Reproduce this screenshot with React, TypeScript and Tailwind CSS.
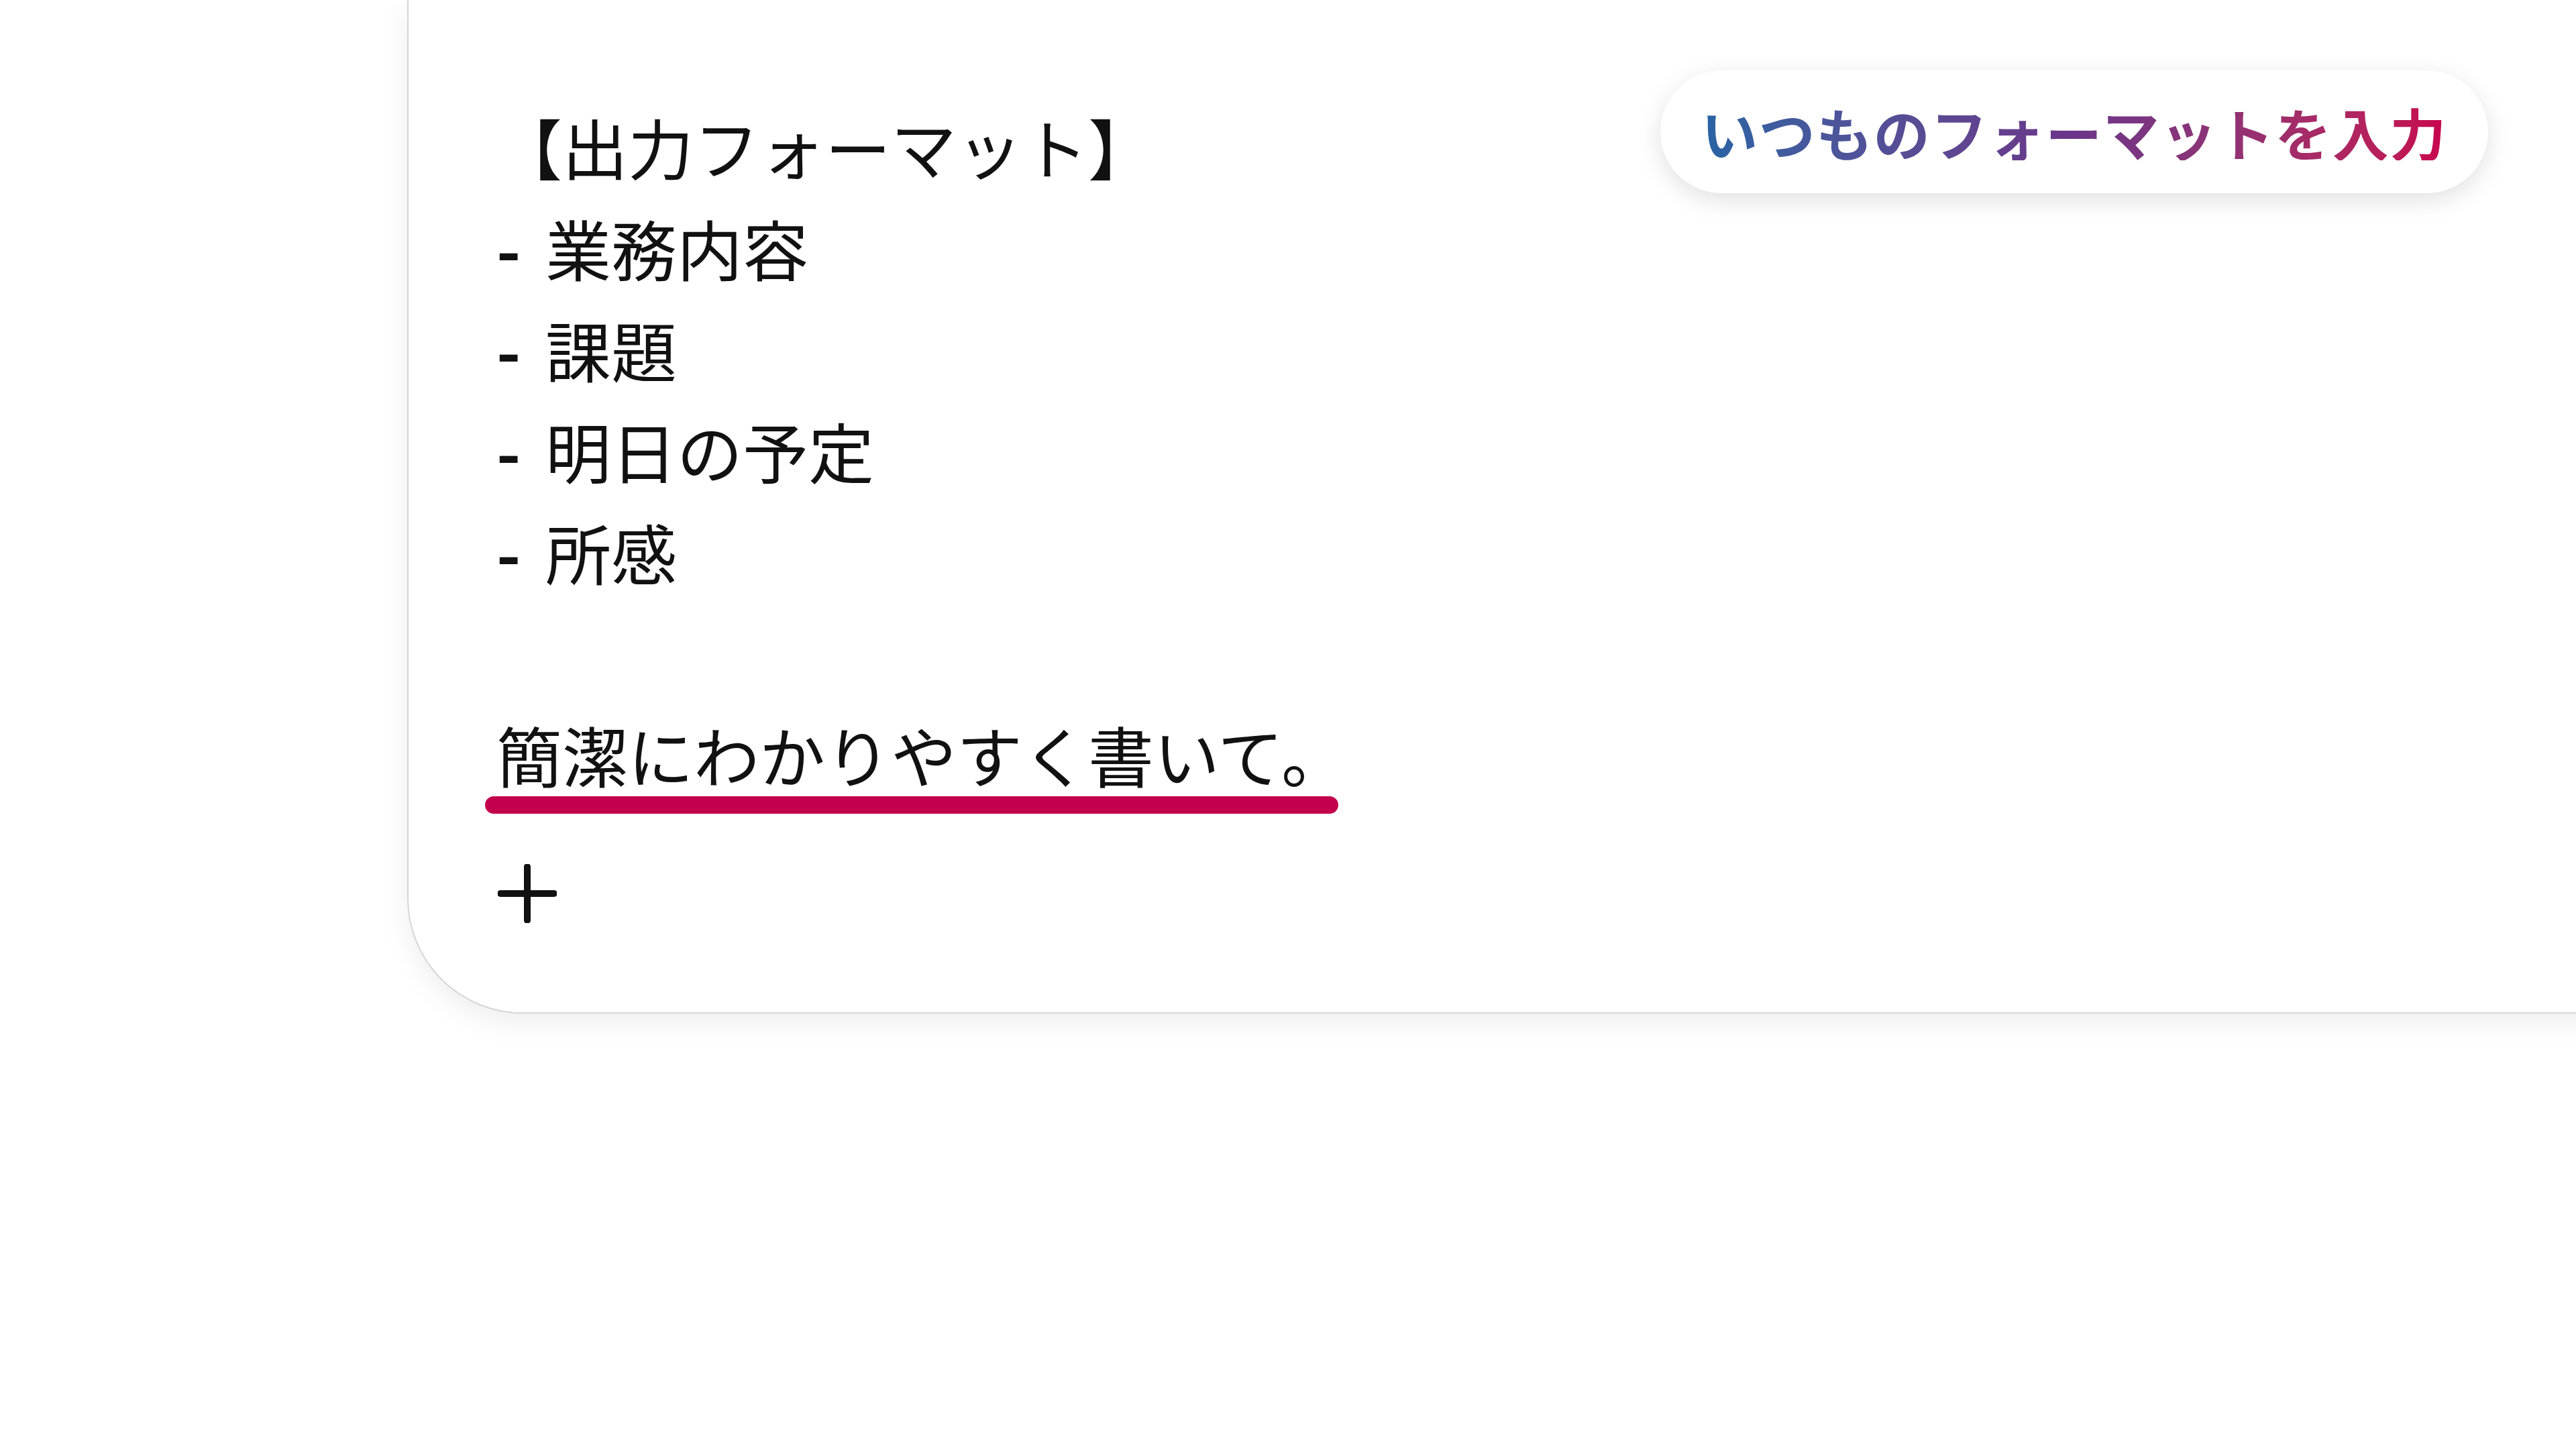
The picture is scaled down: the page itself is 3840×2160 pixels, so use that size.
import React from 'react';

const lines = ['業務内容', '課題', '明日の予定', '所感'];

const App: React.FC = () => {
  return (
    <div
      className="relative w-[3840px] h-[2160px] overflow-hidden bg-white text-[#111]"
      style={{ fontFamily: '"Noto Sans CJK JP", "Noto Sans", sans-serif' }}
    >
      {/* note card, runs off the top and right edges */}
      <div className="ml-[607px] w-[3400px] bg-white border-l-2 border-b-2 border-[#d6d6d6] rounded-bl-[172px] shadow-[0_14px_40px_rgba(0,0,0,0.07)] pt-[142px] pl-[131px] pb-[133px]">
        <div className="text-[98px] leading-[151px] font-normal">
          <p>【出力フォーマット】</p>
          {lines.map((l) => (
            <p key={l} className="flex">
              <span className="inline-block w-[73px] font-bold">-</span>
              <span>{l}</span>
            </p>
          ))}
          <p>&nbsp;</p>
          <p>簡潔にわかりやすく書いて。</p>
        </div>
        <div className="-mt-[12px] -ml-[17px] h-[26px] w-[1272px] rounded-full bg-[#c3004b]" />

        <div className="mt-[75px] ml-[2px]">
          <svg width="88" height="88" viewBox="0 0 88 88" fill="none">
            <path d="M44 4V84M4 44H84" stroke="#111" strokeWidth="10" strokeLinecap="round" />
          </svg>
        </div>
      </div>

      {/* floating prompt chip */}
      <div className="absolute left-[2475px] top-[105px] w-[1234px] h-[183px] rounded-full bg-white shadow-[0_10px_36px_rgba(0,0,0,0.12)] flex items-center justify-center">
        <span className="text-[84px] font-bold leading-none tracking-[1.5px] bg-gradient-to-r from-[#2664a4] via-[#6b3589] to-[#c8004e] bg-clip-text text-transparent">
          いつものフォーマットを入力
        </span>
      </div>
    </div>
  );
};

export default App;
